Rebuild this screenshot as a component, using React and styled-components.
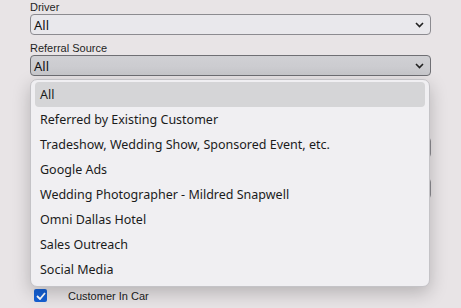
import React from "react";
import styled, { createGlobalStyle } from "styled-components";

const Global = createGlobalStyle`
  html, body { margin: 0; padding: 0; background: #e8e4e6; }
  body { width: 461px; height: 308px; overflow: hidden; font-family: "Noto Sans", "DejaVu Sans", sans-serif; }
`;

const Page = styled.div`
  width: 461px;
  height: 308px;
  box-sizing: border-box;
  padding: 1px 30px 0 30px;
  background: #e8e4e6;
`;

const Form = styled.div`
  position: relative;
  width: 401px;
  display: flex;
  flex-direction: column;
`;

const Field = styled.div`
  display: flex;
  flex-direction: column;
  padding-top: ${(p) => (p.$bare ? 13 : 0)}px;
  margin-bottom: ${(p) => p.$mb ?? 7}px;
`;

const Label = styled.label`
  font-family: "Liberation Sans", Arial, sans-serif;
  font-size: 11px;
  line-height: 13px;
  color: #1f1f1f;
  height: 13px;
`;

const SelectBox = styled.div`
  box-sizing: border-box;
  height: 21px;
  width: ${(p) => p.$w || "401px"};
  border: 1px solid ${(p) => (p.$active ? "#6f6f74" : "#8c8b90")};
  border-radius: 4px;
  background: ${(p) =>
    p.$active ? "linear-gradient(#d0d0d4, #c9c9cd)" : "#e9e8ec"};
  display: flex;
  align-items: center;
  justify-content: space-between;
  padding: 0 6px 0 3px;
  font-family: "Noto Sans", sans-serif;
  font-size: 13px;
  color: #111;
`;

const Chevron = () => (
  <svg width="9" height="6" viewBox="0 0 9 6">
    <path d="M1 1 L4.5 4.5 L8 1" fill="none" stroke="#222" strokeWidth="1.6" />
  </svg>
);

const Listbox = styled.ul`
  position: absolute;
  left: 0;
  top: 78px;
  width: 400px;
  margin: 0;
  padding: 2px 4px 4px 4px;
  box-sizing: border-box;
  list-style: none;
  background: #f0eff2;
  border: 1px solid #c4c3c7;
  border-radius: 7px;
  box-shadow: 0 6px 18px rgba(0, 0, 0, 0.22);
  z-index: 5;
`;

const Option = styled.li`
  height: 25px;
  display: flex;
  align-items: center;
  padding-left: 5px;
  border-radius: 4px;
  font-family: "Noto Sans", sans-serif;
  font-size: 12.5px;
  color: #1b1b1b;
  background: ${(p) => (p.$selected ? "#d5d5d7" : "transparent")};
`;

const CheckRow = styled.div`
  display: flex;
  align-items: center;
  gap: 21px;
  height: 15px;
  padding-left: 4px;
`;

const Box = styled.span`
  width: 13px;
  height: 13px;
  border-radius: 2px;
  background: #1560d4;
  display: flex;
  align-items: center;
  justify-content: center;
`;

const CheckLabel = styled.span`
  font-family: "Liberation Sans", Arial, sans-serif;
  font-size: 11px;
  color: #222;
`;

const options = [
  "All",
  "Referred by Existing Customer",
  "Tradeshow, Wedding Show, Sponsored Event, etc.",
  "Google Ads",
  "Wedding Photographer - Mildred Snapwell",
  "Omni Dallas Hotel",
  "Sales Outreach",
  "Social Media",
];

export default function App() {
  return (
    <>
      <Global />
      <Page>
        <Form>
          <Field>
            <Label>Driver</Label>
            <SelectBox>
              <span>All</span>
              <Chevron />
            </SelectBox>
          </Field>
          <Field>
            <Label>Referral Source</Label>
            <SelectBox $active>
              <span>All</span>
              <Chevron />
            </SelectBox>
          </Field>
          <Field $bare>
            <SelectBox $w="200px" />
          </Field>
          <Field $bare>
            <SelectBox />
          </Field>
          <Field $bare $mb={20}>
            <SelectBox />
          </Field>
          <Field $bare $mb={35}>
            <SelectBox $w="200px" />
          </Field>
          <CheckRow>
            <Box>
              <svg width="10" height="8" viewBox="0 0 10 8">
                <path d="M1 4 L4 7 L9 1" fill="none" stroke="#fff" strokeWidth="1.8" />
              </svg>
            </Box>
            <CheckLabel>Customer In Car</CheckLabel>
          </CheckRow>
          <Listbox>
            {options.map((o, i) => (
              <Option key={o} $selected={i === 0}>
                {o}
              </Option>
            ))}
          </Listbox>
        </Form>
      </Page>
    </>
  );
}
